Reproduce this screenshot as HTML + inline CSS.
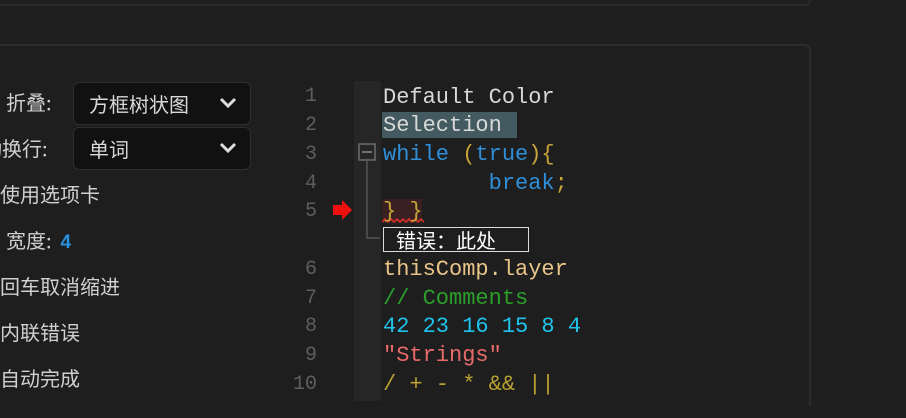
<!DOCTYPE html>
<html><head><meta charset="utf-8"><style>
html{overflow:hidden;height:418px;}
body{margin:0;width:906px;height:418px;background:#1f1f1f;overflow:hidden;position:relative;font-family:"Liberation Sans","Noto Sans CJK SC",sans-serif;}
.top{position:absolute;left:-10px;top:-20px;width:817px;height:22px;border:2px solid #2c2c2c;border-radius:6px;}
.panel{position:absolute;left:-10px;top:44px;width:817px;height:360px;border:2px solid #2d2d2d;border-bottom:none;border-radius:7px 7px 0 0;background:#1e1e1e;}
.lbl{position:absolute;color:#d0d0d0;font-size:20px;line-height:24px;font-family:"Noto Sans CJK SC",sans-serif;}
.dd{position:absolute;left:73px;width:176px;height:41px;background:#111;border:1px solid #2e2e2e;border-radius:6px;color:#d8d8d8;font-size:20px;font-family:"Noto Sans CJK SC",sans-serif;}
.dd span{position:absolute;left:15px;top:6px;}
.dd svg{position:absolute;right:13px;top:14px;}
.gut{position:absolute;left:354px;top:81px;width:27px;height:320px;background:#262626;}
.ln{position:absolute;left:280px;width:37px;text-align:right;color:#5e5e5e;font:20px "Liberation Mono",monospace;}
.code{position:absolute;left:383px;font:22px "Liberation Mono",monospace;white-space:pre;color:#d8d8d8;line-height:26px;}
</style></head><body>
<div class="top"></div>
<div class="panel"></div>
<div class="lbl" style="left:6px;top:90px">折叠:</div>
<div class="lbl" style="left:-18px;top:136px">动换行:</div>
<div class="lbl" style="left:0;top:182px">使用选项卡</div>
<div class="lbl" style="left:6px;top:228px">宽度:&nbsp; <b style="color:#2a90e0;font-size:19px;font-family:'Liberation Sans'">4</b></div>
<div class="lbl" style="left:0;top:274px">回车取消缩进</div>
<div class="lbl" style="left:0;top:320px">内联错误</div>
<div class="lbl" style="left:0;top:366px">自动完成</div>
<div class="dd" style="top:82px"><span>方框树状图</span><svg width="18" height="12"><path d="M2 2L9 9L16 2" stroke="#ddd" stroke-width="3" fill="none"/></svg></div>
<div class="dd" style="top:127px"><span>单词</span><svg width="18" height="12"><path d="M2 2L9 9L16 2" stroke="#ddd" stroke-width="3" fill="none"/></svg></div>
<div class="gut"></div>
<div class="ln" style="top:85px">1</div>
<div class="ln" style="top:114px">2</div>
<div class="ln" style="top:143px">3</div>
<div class="ln" style="top:172px">4</div>
<div class="ln" style="top:200px">5</div>
<div class="ln" style="top:258px">6</div>
<div class="ln" style="top:287px">7</div>
<div class="ln" style="top:315px">8</div>
<div class="ln" style="top:344px">9</div>
<div class="ln" style="top:373px">10</div>
<svg style="position:absolute;left:332px;top:199px" width="22" height="22"><path d="M1 6H10V1L20 11L10 21V16H1Z" fill="#f01010"/></svg>
<svg style="position:absolute;left:358px;top:143px" width="22" height="155"><rect x="1" y="1" width="16" height="16" fill="none" stroke="#777" stroke-width="1.3"/><path d="M4 9H14" stroke="#888" stroke-width="1.5"/><path d="M9 17V95H24" stroke="#555" stroke-width="1.5" fill="none"/></svg>
<div style="position:absolute;left:382px;top:112px;width:135px;height:26px;background:#435a60"></div>
<div style="position:absolute;left:382px;top:199px;width:40px;height:24px;background:#3a2020"></div>
<svg style="position:absolute;left:382px;top:218px" width="42" height="6"><path d="M0 4L3 1L6 4L9 1L12 4L15 1L18 4L21 1L24 4L27 1L30 4L33 1L36 4L39 1L42 4" stroke="#e03030" stroke-width="1.5" fill="none"/></svg>
<div class="code" style="top:85px">Default Color</div>
<div class="code" style="top:113px">Selection</div>
<div class="code" style="top:142px"><span style="color:#2f8fd8">while</span> <span style="color:#c8a43a">(</span><span style="color:#2f8fd8">true</span><span style="color:#c8a43a">){</span></div>
<div class="code" style="top:171px;color:#2f8fd8">        break<span style="color:#c8a43a">;</span></div>
<div class="code" style="top:199px;color:#c8a43a">} }</div>
<div style="position:absolute;left:383px;top:227px;width:146px;height:25px;border:1.5px solid #ddd;color:#fff;font:20px 'Noto Sans CJK SC',sans-serif;line-height:23px;padding-left:12px;box-sizing:border-box;">错误：此处</div>
<div class="code" style="top:257px;color:#e8c488">thisComp.layer</div>
<div class="code" style="top:286px;color:#2aa02a">// Comments</div>
<div class="code" style="top:314px;color:#1ec4ec">42 23 16 15 8 4</div>
<div class="code" style="top:343px;color:#e86a6a">"Strings"</div>
<div class="code" style="top:372px;color:#b8a030">/ + - * &amp;&amp; ||</div>
</body></html>
